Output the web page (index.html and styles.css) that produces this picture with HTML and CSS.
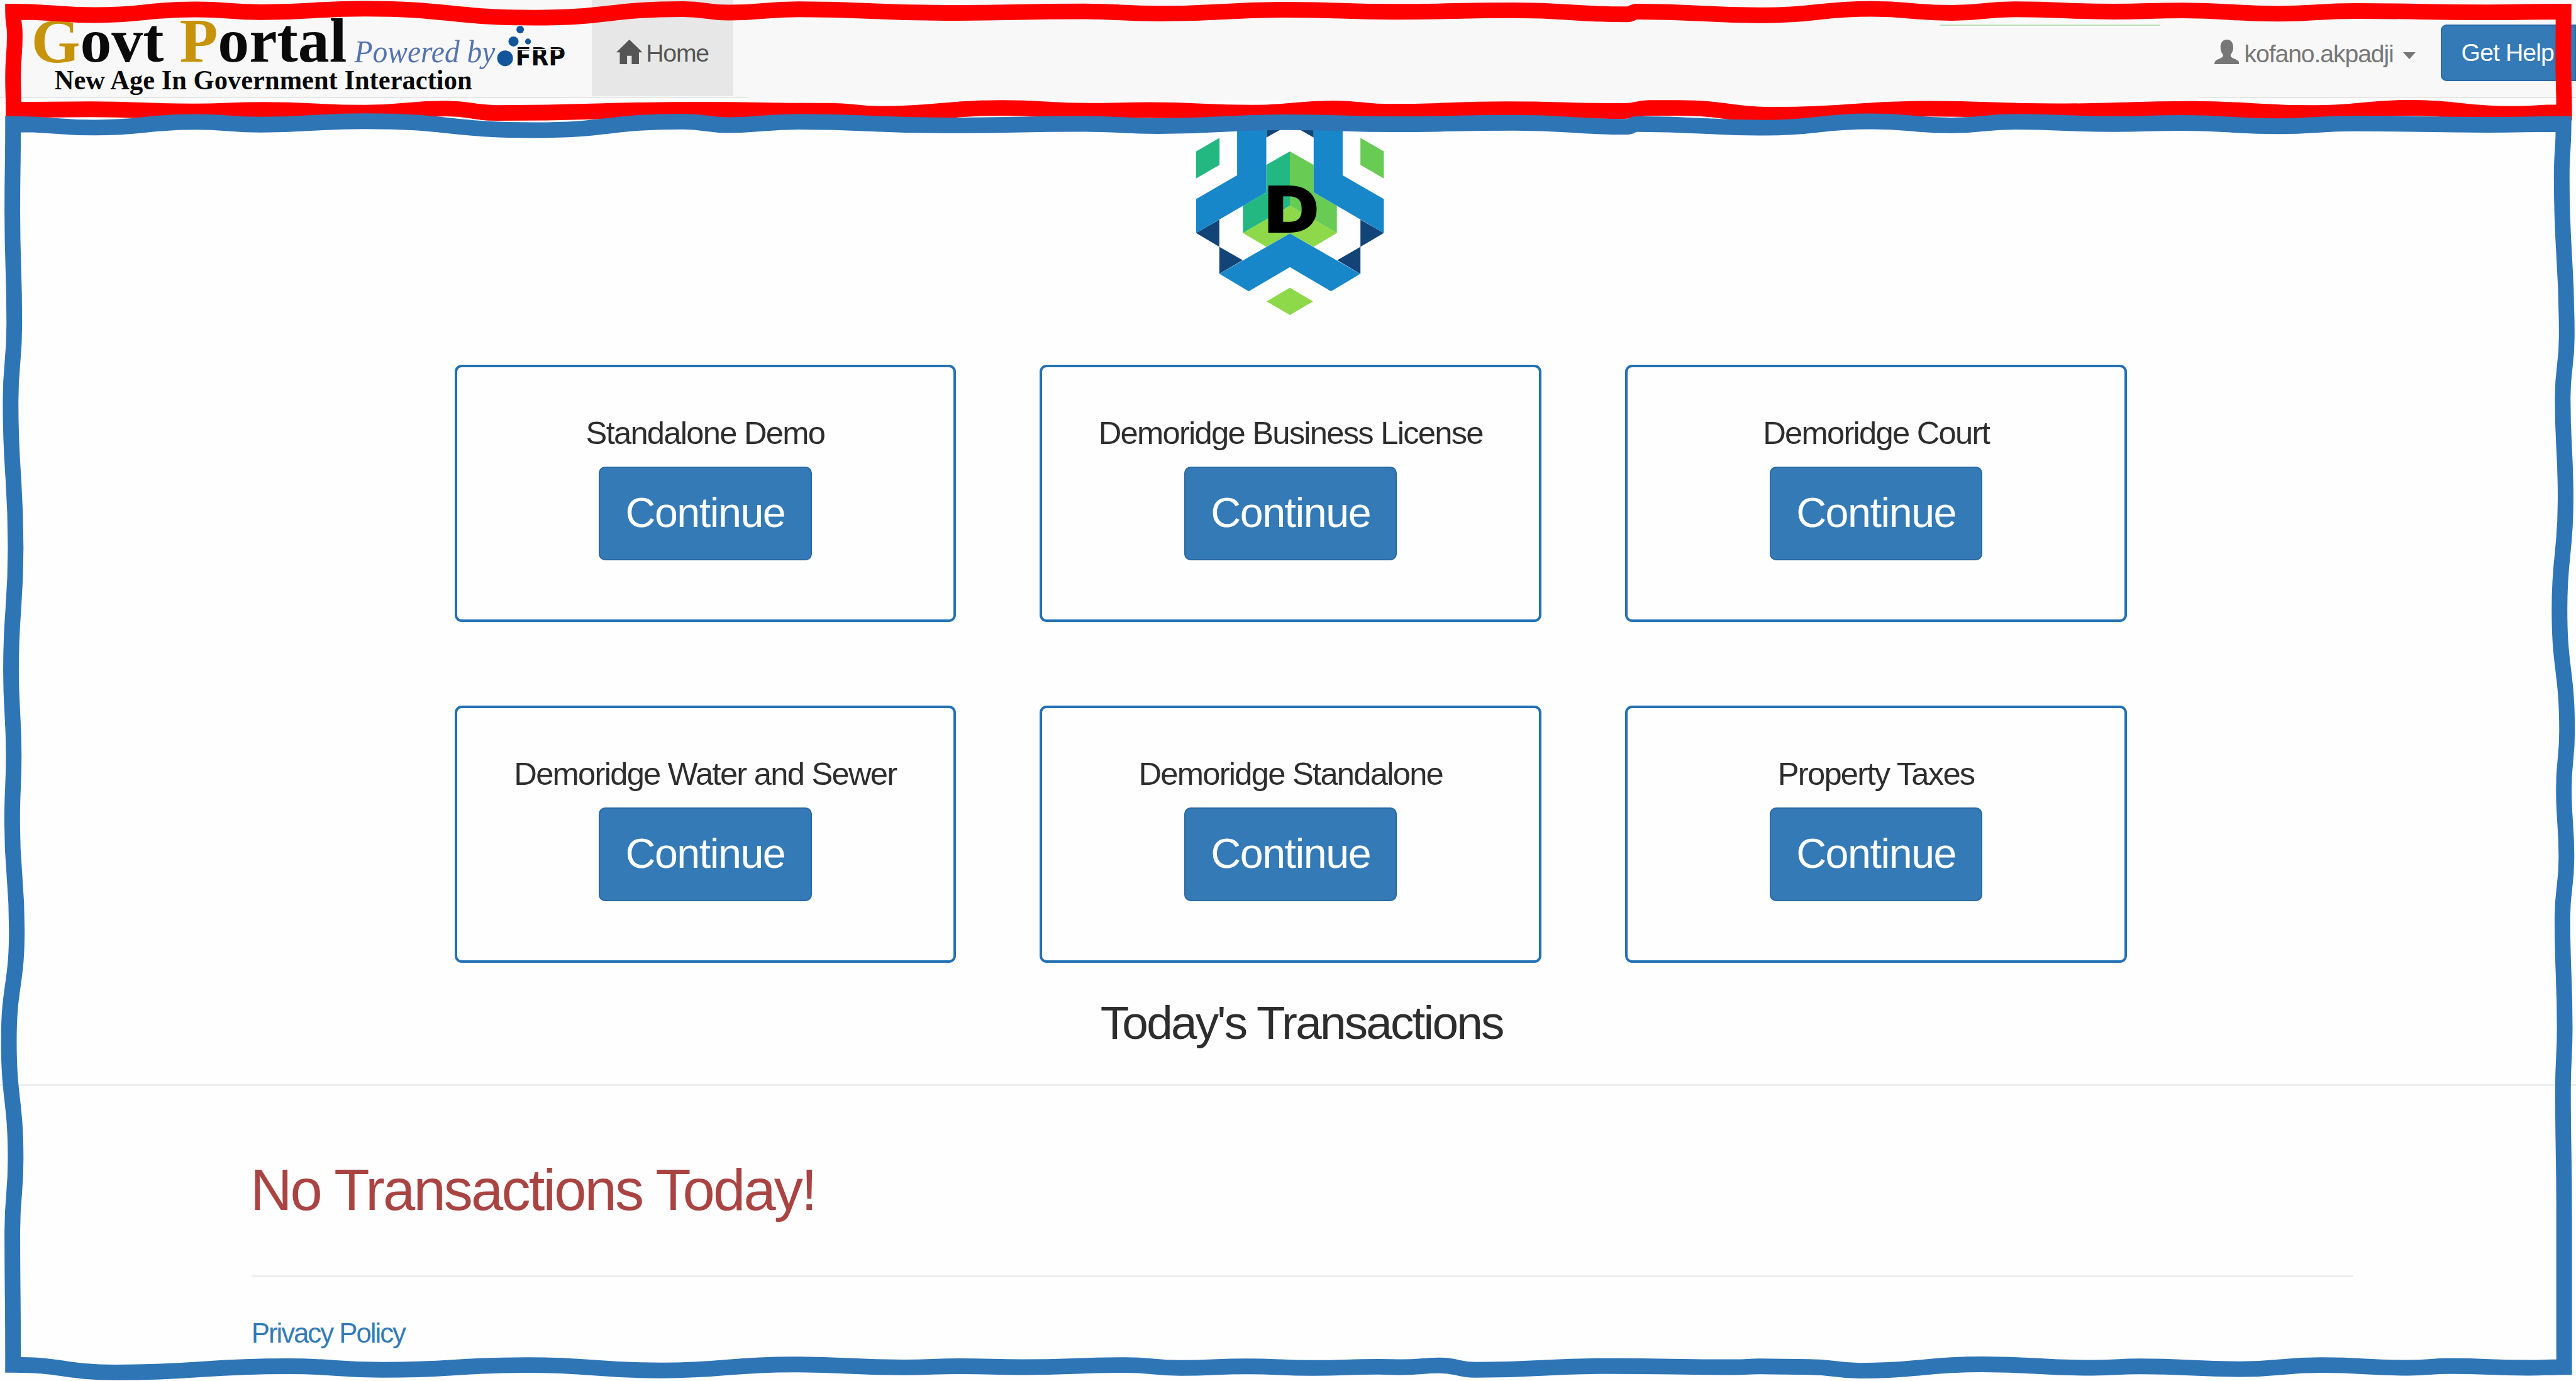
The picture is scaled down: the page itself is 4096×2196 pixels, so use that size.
FILE: index.html
```html
<!DOCTYPE html>
<html lang="en">
<head>
<meta charset="utf-8">
<title>Govt Portal</title>
<link rel="stylesheet" href="styles.css">
</head>
<body>
<header class="navbar">
  <div class="nav-left">
    <svg class="brand" viewBox="0 0 1020 166" role="img" aria-label="Govt Portal">
      <g class="brand-serif">
        <text class="brand-name" x="54" y="106" textLength="544" lengthAdjust="spacingAndGlyphs"><tspan class="gold">G</tspan>ovt <tspan class="gold">P</tspan>ortal</text>
        <text class="brand-by" x="611" y="107" textLength="243" lengthAdjust="spacingAndGlyphs">Powered by</text>
        <text class="brand-tag" x="94" y="154.5" textLength="720" lengthAdjust="spacingAndGlyphs">New Age In Government Interaction</text>
      </g>
      <g fill="#14569c">
        <circle cx="897" cy="51" r="6.5"/>
        <circle cx="885.5" cy="71.5" r="8.7"/>
        <circle cx="910.5" cy="71.5" r="5"/>
        <circle cx="871" cy="100.5" r="13.6"/>
      </g>
      <text class="brand-frp" x="889" y="113" textLength="86" lengthAdjust="spacingAndGlyphs">FRP</text>
      <rect x="893" y="84.5" width="74" height="2" fill="#f0f0f0"/>
    </svg>
    <a class="tab">
      <svg class="icon-home" viewBox="0 0 45 43"><path d="M22.500 0 45 22H39V43H26.500V28H18.500V43H6V22H0Z" fill="#555"/></svg>
      <span>Home</span>
    </a>
  </div>
  <div class="nav-mid"><div class="nav-line"></div></div>
  <div class="nav-right">
    <svg class="icon-user" viewBox="0 0 43 43"><path d="M21.500 0C28 0 32.500 5 32.500 13C32.500 19 30.500 23 28 26C27.500 30 31 31.500 36 33.500C41 35.500 43 37.500 43 43H0C0 37.500 2 35.500 7 33.500C12 31.500 15.500 30 15 26C12.500 23 10.500 19 10.500 13C10.500 5 15 0 21.500 0Z" fill="#777"/></svg>
    <span class="user">kofano.akpadji</span>
    <span class="caret"></span>
    <a class="help">Get Help</a>
  </div>
</header>
<main>
  <svg class="crest" viewBox="0 0 1440 1200">
    <path fill="#23b882" d="M732 243 610 313V455L489 525V665L732 525ZM247 243 368 173V313L247 383Z"/>
    <path fill="#67cb54" d="M732 243 855 313V455L975 525V665L732 525ZM1097 173 1218 243V383L1097 313Z"/>
    <path fill="#8dd949" d="M489 665 732 525 975 665 855 737 732 668 610 737ZM732 948 852 1019 732 1090 612 1019Z"/>
    <path fill="#134478" d="M247 665 367 596V737ZM367 737 488 806 367 877ZM1218 665 1097 596V737ZM1097 737 977 806 1097 877ZM610 100H737L610 172ZM855 100H731L855 172Z"/>
    <path fill="#1887c9" d="M459 100H610V455L247 665V490L459 367ZM1005 100H855V455L1218 665V490L1005 367ZM732 668 1096 877 945 967 732 842 519 967 368 877Z"/>
    <text class="crest-letter" x="602" y="664" textLength="282" lengthAdjust="spacingAndGlyphs">D</text>
  </svg>
  <section class="cards">
    <article class="card"><h4>Standalone Demo</h4><a class="btn">Continue</a></article>
    <article class="card"><h4>Demoridge Business License</h4><a class="btn">Continue</a></article>
    <article class="card"><h4>Demoridge Court</h4><a class="btn">Continue</a></article>
    <article class="card"><h4>Demoridge Water and Sewer</h4><a class="btn">Continue</a></article>
    <article class="card"><h4>Demoridge Standalone</h4><a class="btn">Continue</a></article>
    <article class="card"><h4>Property Taxes</h4><a class="btn">Continue</a></article>
  </section>
  <h3 class="today">Today's Transactions</h3>
  <hr class="rule">
  <div class="container">
    <h1 class="none">No Transactions Today!</h1>
    <hr class="rule">
    <a class="privacy">Privacy Policy</a>
  </div>
</main>
<svg class="frames" viewBox="0 0 4442 2382">
  <path id="frame-nav" stroke="#ff0000"/>
  <path id="frame-body" stroke="#2e75b6"/>
</svg>
<script src="frames.js"></script>
</body>
</html>
```
FILE: styles.css
```css
/* 1rem = 10 design units of a 4442-unit wide canvas */
html { font-size: 9.2211px; }
* { box-sizing: border-box; }
body {
  margin: 0;
  width: 444.2rem;
  height: 238.15rem;
  position: relative;
  overflow: hidden;
  background: #fefefe;
  color: #2d2d2d;
  font-family: "Liberation Sans", Arial, sans-serif;
}
h1, h3, h4 { margin: 0; font-weight: 400; white-space: nowrap; }

.navbar { display: flex; align-items: flex-start; height: 17.3rem; }
.nav-left, .nav-right {
  display: flex;
  height: 16.9rem;
  background: #f8f8f8;
  border-bottom: .3rem solid #e7e7e7;
  font-size: 4.25rem;
  white-space: nowrap;
}
.nav-left { width: 129rem; }
.brand { width: 102rem; height: 16.6rem; flex: none; }
.brand-serif { font-family: "Liberation Serif", serif; }
.brand-name { font-size: 108px; font-weight: 700; fill: #0a0a0a; }
.gold { fill: #c6930a; }
.brand-by { font-size: 54px; font-style: italic; fill: #5573b0; }
.brand-tag { font-size: 47px; font-weight: 700; fill: #0a0a0a; }
.brand-frp { font: 700 43px "DejaVu Sans", sans-serif; fill: #0a0a0a; }
.tab {
  display: flex;
  align-items: center;
  gap: .6rem;
  width: 24.4rem;
  height: 16.6rem;
  padding: 1.8rem 0 0 4.3rem;
  background: #e7e7e7;
  color: #555;
  letter-spacing: -.13rem;
}
.icon-home { width: 4.5rem; height: 4.3rem; margin-bottom: .5rem; flex: none; }
.nav-mid {
  flex: 1;
  display: flex;
  justify-content: flex-end;
  align-items: flex-start;
  height: 17.3rem;
  padding: 4.1rem 6.6rem 0 0;
  background: #f8f8f8;
}
.nav-line { width: 37.9rem; height: .32rem; background: #b5dfb5; border-top: .18rem solid #fff; }
.nav-right {
  align-items: center;
  width: 65.1rem;
  padding: 1.6rem 0 0 2.7rem;
  color: #777;
}
.icon-user { width: 4.3rem; height: 4.3rem; margin: 0 .9rem .4rem 0; flex: none; }
.user { padding-top: .3rem; letter-spacing: -.12rem; }
.caret {
  margin: .9rem 4.4rem 0 auto;
  border: 1.15rem solid transparent;
  border-top: 1.2rem solid #777;
  border-bottom: 0;
}
.help {
  width: 23.3rem;
  height: 9.8rem;
  flex: none;
  border: .3rem solid #2a69a4;
  border-radius: 1rem 0 0 1rem;
  background: #337ab7;
  color: #fff;
  padding-left: 3.3rem;
  line-height: 9.4rem;
  letter-spacing: -.1rem;
}

main { display: flex; flex-direction: column; }
.crest { width: 48rem; height: 40rem; margin: .7rem 0 0 198rem; }
.crest-letter { font: 900 334px Inter, sans-serif; fill: #000; }
.cards {
  display: grid;
  grid-template-columns: repeat(3, 86.5rem);
  gap: 14.45rem;
  margin: 4.93rem 0 0 78.36rem;
}
.card {
  height: 44.34rem;
  border: .5rem solid #2471b5;
  border-radius: 1.2rem;
  padding-top: 8.3rem;
  display: flex;
  flex-direction: column;
  align-items: center;
}
.card h4 { font-size: 5.5rem; line-height: 6rem; letter-spacing: -.19rem; }
.btn {
  width: 36.7rem;
  height: 16.2rem;
  margin-top: 2.76rem;
  border: .3rem solid #2a69a4;
  border-radius: 1.1rem;
  background: #337ab7;
  color: #fff;
  font-size: 7.2rem;
  line-height: 15.5rem;
  letter-spacing: -.16rem;
  text-align: center;
}
.today {
  margin-top: 5.8rem;
  padding-left: 4.7rem;
  text-align: center;
  font-size: 8.1rem;
  line-height: 9rem;
  letter-spacing: -.3rem;
}
.rule { width: 100%; height: .33rem; margin: 6.14rem 0 0; border: 0; background: #eee; }
.container { display: flex; flex-direction: column; margin: 12.45rem 38.4rem 0 43.35rem; }
.none { font-size: 10rem; line-height: 11rem; letter-spacing: -.31rem; color: #a94442; margin-left: -.2rem; }
.container .rule { margin-top: 9.19rem; }
.privacy { margin-top: 6.9rem; font-size: 4.75rem; line-height: 5.4rem; letter-spacing: -.22rem; color: #337ab7; white-space: nowrap; }

/* hand-drawn region outlines over the page */
.frames { position: absolute; inset: 0; width: 100%; height: 100%; pointer-events: none; }
.frames path { fill: none; stroke-width: 27; stroke-linejoin: miter; stroke-miterlimit: 8; }
```
FILE: frames.js
```js
// Each frame is four wavy edges; points are the crests and troughs of the centre line.
const top_ = [[22,20],[163,26],[337,16.3],[450,21],[629,15],[921,30.5],[1178,15.7],[1256,21.7],[1377,16],[1629,22.3],[1870,19.7],[1997,23.5],[2221,16.8],[2405,20.3],[2611,17.8],[2806,24.7],[2823,20],[3043,26.3],[3227,15.3],[3366,22.3],[3475,16],[3645,20],[3765,18],[3928,23.7],[4062,19],[4289,21.3],[4421,20]];
const navFrame = {
  top: top_,
  right: [[4421,20],[4420.5,100],[4422,194]],
  bottom: [[23,189.500],[156,188.5],[333,192.2],[453,189.5],[630,194.5],[769,187.2],[857,194.8],[1204,189.2],[1431,191.2],[1516,196.5],[1728,186.2],[1877,191.2],[1983,189.8],[2160,194.5],[2299,187],[2398,192.8],[2596,188.5],[2802,191.5],[2844,186.2],[2894,186.2],[3064,198],[3326,187.5],[3545,192],[3779,188],[3992,195],[4155,186],[4332,196.5],[4422,193]],
  left: [[22,20],[25,60],[22,133],[23,189.5]]
};
const bodyFrame = {
  top: top_.map(([x, y]) => [x, y + 194]),
  right: [[4421,214],[4417.8,304],[4426.5,580],[4419.5,686],[4424.5,861],[4414,1051],[4427,1261],[4421.5,1360],[4426,1479],[4419,1584],[4423,1774],[4420,1879],[4422,2090],[4422,2358]],
  bottom: [[22,2354],[198,2367.2],[496,2356.5],[659,2362.8],[909,2354.5],[1140,2363.8],[1367,2353.5],[1558,2358.5],[1657,2356.5],[1763,2358.2],[1940,2354.5],[2035,2359.5],[2150,2356.8],[2263,2359.5],[2377,2357.5],[2419,2358.2],[2483,2355.2],[2544,2362.8],[2773,2356.2],[2993,2358.2],[3035,2356.8],[3120,2357.8],[3208,2364.2],[3418,2353.2],[3609,2359.2],[3690,2356.8],[3864,2361.5],[4003,2354.5],[4154,2359.2],[4225,2356.2],[4360,2359.2],[4422,2358]],
  left: [[22,214],[20.8,363],[24.2,559],[17.8,693],[26.5,945],[18.5,1156],[23.2,1303],[20.5,1416],[28.5,1605],[14.8,1795],[26.5,1999],[20.8,2125],[22.2,2354]]
};
function edge(points, vertical) {
  let d = "";
  for (let i = 1; i < points.length; i++) {
    const [x0, y0] = points[i - 1], [x1, y1] = points[i];
    const mx = (x0 + x1) / 2, my = (y0 + y1) / 2;
    d += vertical ? `C${x0} ${my} ${x1} ${my} ${x1} ${y1}` : `C${mx} ${y0} ${mx} ${y1} ${x1} ${y1}`;
  }
  return d;
}
function outline(f) {
  return `M${f.top[0]}` + edge(f.top) + edge(f.right, true) +
    edge([...f.bottom].reverse()) + edge([...f.left].reverse(), true) + "Z";
}
document.getElementById("frame-nav").setAttribute("d", outline(navFrame));
document.getElementById("frame-body").setAttribute("d", outline(bodyFrame));
```
